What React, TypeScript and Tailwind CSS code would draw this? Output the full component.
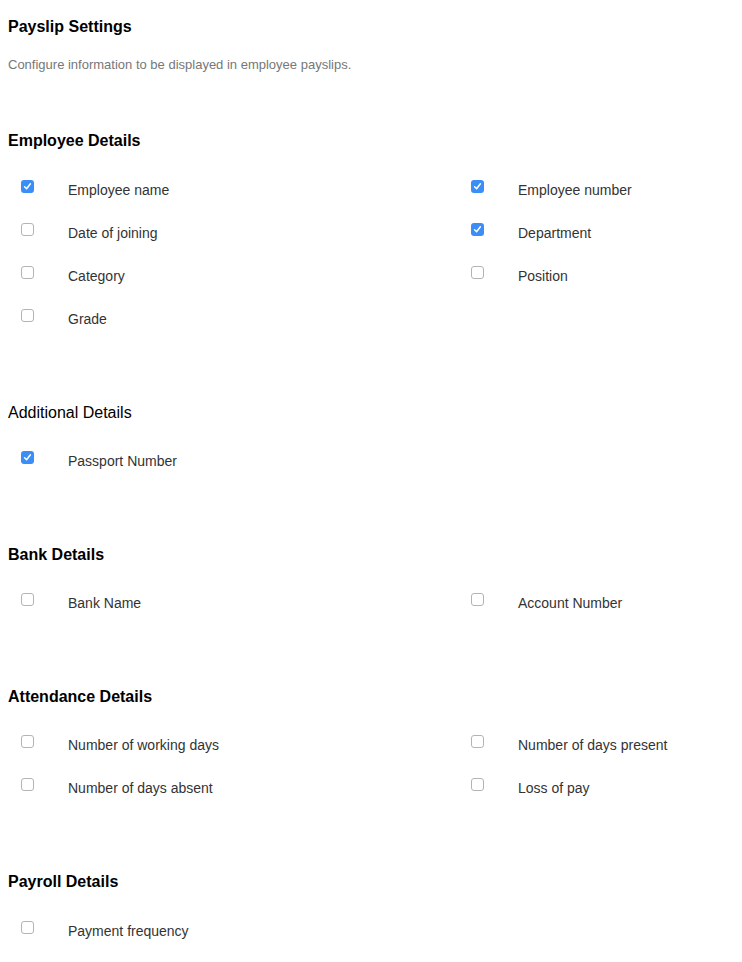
import React from "react";

type Item = { label: string; checked?: boolean };

function Box({ checked }: { checked?: boolean }) {
  if (checked) {
    return (
      <span className="flex h-[13px] w-[13px] shrink-0 items-center justify-center rounded-[3px] bg-[#3b8ef6]">
        <svg width="9" height="9" viewBox="0 0 9 9" fill="none">
          <path d="M1.6 4.8 L3.6 6.8 L7.4 1.8" stroke="white" strokeWidth="1.5" strokeLinecap="round" strokeLinejoin="round" />
        </svg>
      </span>
    );
  }
  return <span className="block h-[13px] w-[13px] shrink-0 rounded-[3px] border border-[#b4b4b4] bg-white" />;
}

function Row({ item }: { item: Item }) {
  return (
    <div className="flex items-start pl-[13px]">
      <Box checked={item.checked} />
      <span className="ml-[34px] text-[14px] leading-[20px] text-[#333333]">{item.label}</span>
    </div>
  );
}

function Section({
  title,
  bold = true,
  items,
  gap = "mt-[28px]",
}: {
  title: string;
  bold?: boolean;
  items: Item[];
  gap?: string;
}) {
  return (
    <div className="mt-[74px]">
      <h2 className={bold ? "text-[16px] font-bold leading-[20px] text-black" : "text-[16px] leading-[20px] text-black"}>{title}</h2>
      <div className={`${gap} grid grid-cols-[450px_1fr] gap-y-[23px]`}>
        {items.map((it) => (
          <Row key={it.label} item={it} />
        ))}
      </div>
    </div>
  );
}

export default function App() {
  return (
    <div className="min-h-[962px] bg-white pl-[8px] pt-[17px] font-['Liberation_Sans',Arial,sans-serif]">
      <h1 className="text-[16px] font-bold leading-[20px] text-black">Payslip Settings</h1>
      <p className="mt-[20px] text-[13px] leading-[16px] text-[#777777]">Configure information to be displayed in employee payslips.</p>

      <div className="mt-[58px]">
        <h2 className="text-[16px] font-bold leading-[20px] text-black">Employee Details</h2>
        <div className="mt-[29px] grid grid-cols-[450px_1fr] gap-y-[23px]">
          <Row item={{ label: "Employee name", checked: true }} />
          <Row item={{ label: "Employee number", checked: true }} />
          <Row item={{ label: "Date of joining" }} />
          <Row item={{ label: "Department", checked: true }} />
          <Row item={{ label: "Category" }} />
          <Row item={{ label: "Position" }} />
          <Row item={{ label: "Grade" }} />
        </div>
      </div>

      <Section title="Additional Details" bold={false} items={[{ label: "Passport Number", checked: true }]} />
      <Section title="Bank Details" items={[{ label: "Bank Name" }, { label: "Account Number" }]} />
      <Section
        title="Attendance Details"
        items={[
          { label: "Number of working days" },
          { label: "Number of days present" },
          { label: "Number of days absent" },
          { label: "Loss of pay" },
        ]}
      />
      <Section title="Payroll Details" gap="mt-[29px]" items={[{ label: "Payment frequency" }]} />
    </div>
  );
}
